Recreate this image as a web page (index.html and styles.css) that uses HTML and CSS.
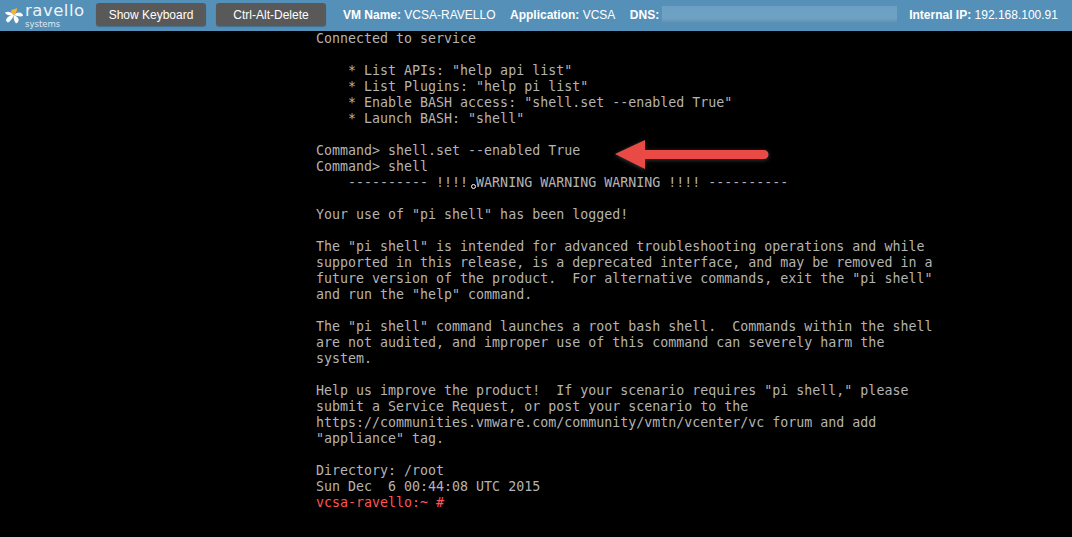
FILE: index.html
```html
<!DOCTYPE html>
<html lang="en">
<head>
<meta charset="utf-8">
<title>VCSA-RAVELLO console</title>
<link rel="stylesheet" href="styles.css">
</head>
<body>
<header class="bar">
  <div class="logo">
    <svg class="mark" width="24" height="29" viewBox="0 0 24 29">
      <g fill="#fff">
        <path d="M14 15 C11 12 8 11 5 12.500 C6 15 10 16 14 15Z"/>
        <path d="M14 15 C10 15 7 17 6 20 C6.500 22 8 23 9 22 C11 20 13 18 14 15Z"/>
        <path d="M14 15 C13 18 14 21 16 23.500 C18 23 19 21 18.500 19 C18 17 16 16 14 15Z"/>
        <path d="M14 15 C17 16 20 17 23 16 C23 14 21 12.500 19 12.500 C17 12.500 15 13.500 14 15Z"/>
      </g>
      <path d="M14 15 C11.500 14 10.500 12 11.500 10 C13 9.500 15 9 17 8 C17 11 16 13.500 14 15Z" fill="#f5b82e"/>
    </svg>
    <div class="logo-text">
      <span class="logo-name">ravello</span>
      <span class="logo-sub">systems</span>
    </div>
  </div>
  <button class="btn btn-first">Show Keyboard</button>
  <button class="btn btn-second">Ctrl-Alt-Delete</button>
  <div class="info info-vm"><b>VM Name:</b> VCSA-RAVELLO</div>
  <div class="info info-app"><b>Application:</b> VCSA</div>
  <div class="info info-dns"><b>DNS:</b><span class="blur"></span></div>
  <div class="info info-ip"><b>Internal IP:</b> 192.168.100.91</div>
</header>
<main class="screen">
<pre class="term">Connected to service

    * List APIs: "help api list"
    * List Plugins: "help pi list"
    * Enable BASH access: "shell.set --enabled True"
    * Launch BASH: "shell"

Command&gt; shell.set --enabled True
Command&gt; shell
    ---------- !!!! WARNING WARNING WARNING !!!! ----------

Your use of "pi shell" has been logged!

The "pi shell" is intended for advanced troubleshooting operations and while
supported in this release, is a deprecated interface, and may be removed in a
future version of the product.  For alternative commands, exit the "pi shell"
and run the "help" command.

The "pi shell" command launches a root bash shell.  Commands within the shell
are not audited, and improper use of this command can severely harm the
system.

Help us improve the product!  If your scenario requires "pi shell," please
submit a Service Request, or post your scenario to the
https://communities.vmware.com/community/vmtn/vcenter/vc forum and add
"appliance" tag.

Directory: /root
Sun Dec  6 00:44:08 UTC 2015
<span class="prompt">vcsa-ravello:~ #</span></pre>
<svg class="arrow" width="160" height="34" viewBox="0 0 160 34">
  <path d="M1 17 L31 3 L31 13 L150 13 A4.5 4.5 0 0 1 150 22 L31 22 L31 32 Z" fill="#ea4a45"/>
</svg>
<span class="cursor"></span>
</main>
</body>
</html>
```
FILE: styles.css
```css
* { box-sizing: border-box; }
html, body { margin: 0; height: 100%; overflow: hidden; background: #000; }
.bar {
  height: 31px;
  padding-bottom: 2px;
  background: #5590b8;
  display: flex;
  align-items: center;
  color: #fff;
  font: 12px "Liberation Sans", Arial, sans-serif;
  white-space: nowrap;
}
.logo { width: 96px; display: flex; align-items: center; flex: none; }
.mark { flex: none; margin-right: 1px; }
.logo-text { display: flex; flex-direction: column; }
.logo-name { font: 16.5px/18px "DejaVu Sans", sans-serif; letter-spacing: .5px; color: #eef4f8; }
.logo-sub { font: 8.5px/8px "DejaVu Sans", sans-serif; letter-spacing: 0; color: #dfeaf2; }
.btn {
  width: 110px;
  height: 23px;
  padding: 0;
  border: 0;
  border-radius: 3px;
  background: #595959;
  box-shadow: 0 1px 1px #44708f;
  color: #fff;
  font: 12px "Liberation Sans", Arial, sans-serif;
  flex: none;
}
.btn-second { margin-left: 10px; }
.info { flex: none; font-size: 12px; }
.info b { font-weight: bold; }
.info-vm { margin-left: 17px; }
.info-app { margin-left: 14.5px; }
.info-dns { margin-left: 14.5px; display: flex; align-items: center; gap: 3px; }
.blur {
  display: block;
  width: 235px;
  height: 17px;
  background: linear-gradient(#6c9fc2 0, #6fa3c4 70%, #5f8fb0 100%);
  filter: blur(.6px);
}
.info-ip { margin-left: 12px; }
.screen { position: relative; height: 506px; padding-left: 316px; background: #000; }
.term {
  margin: 0;
  font: 13.3px/16px "DejaVu Sans Mono", "Liberation Mono", monospace;
  color: #b4b4b4;
}
.prompt { color: #ff5555; }
.arrow { position: absolute; left: 614px; top: 106px; filter: drop-shadow(0 1px 2px rgba(120, 120, 120, .5)); }
.cursor {
  position: absolute;
  left: 470.5px;
  top: 152.5px;
  width: 5px;
  height: 5px;
  border: 1px solid #fff;
  border-radius: 50%;
  background: #000;
}
```
